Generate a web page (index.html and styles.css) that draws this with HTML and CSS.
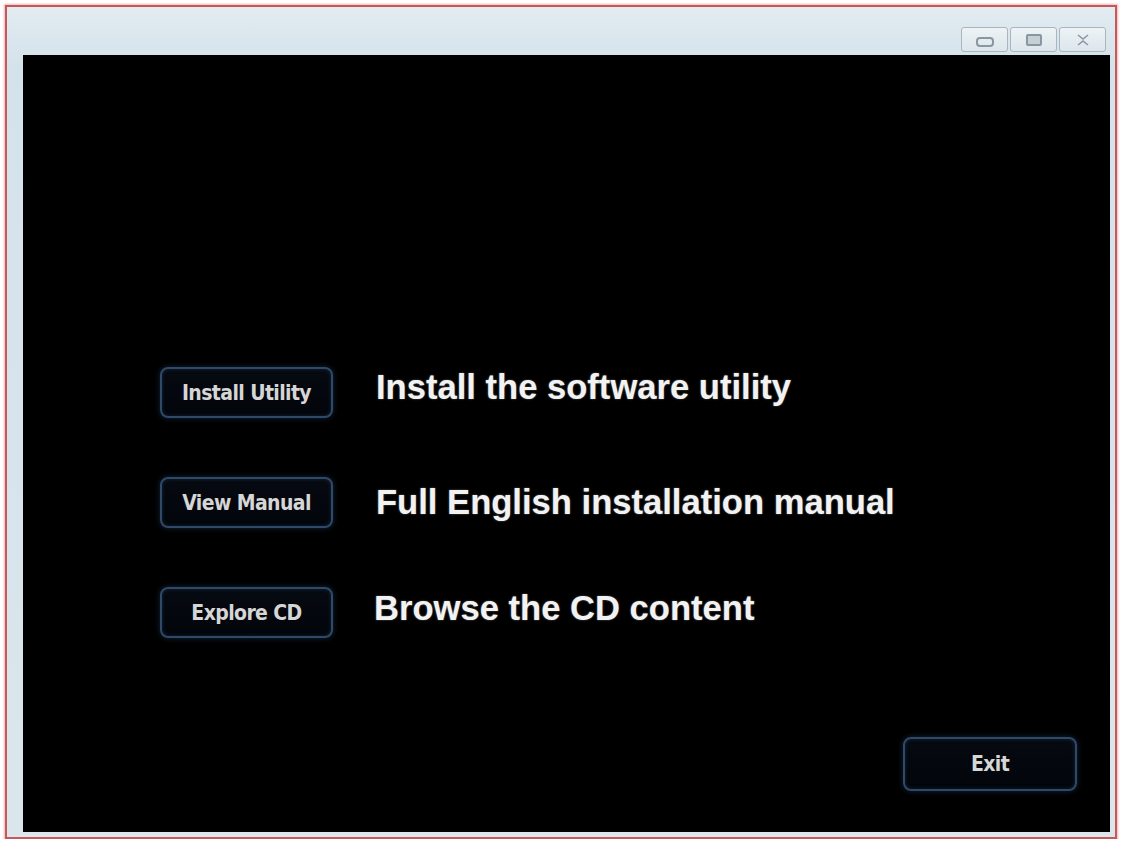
FILE: index.html
```html
<!DOCTYPE html>
<html lang="en">
<head>
    <meta charset="UTF-8">
    <meta name="viewport" content="width=device-width, initial-scale=1.0">
    <title>Setup</title>
    <link rel="stylesheet" href="styles.css">
</head>
<body>
    <div class="window">
        <div class="titlebar">
            <div class="controls">
                <span class="ctl"><span class="ico-min"></span></span>
                <span class="ctl"><span class="ico-max"></span></span>
                <span class="ctl">
                    <svg width="14" height="12" viewBox="0 0 14 12">
                        <path d="M2 1 L7 5 L12 1 M2 11 L7 7 L12 11" fill="none" stroke="#8a98a2" stroke-width="1.6"/>
                    </svg>
                </span>
            </div>
        </div>

        <div class="content">
            <div class="menu">
                <div class="row">
                    <button class="btn">Install Utility</button>
                    <span class="label label-up">Install the software utility</span>
                </div>
                <div class="row">
                    <button class="btn">View Manual</button>
                    <span class="label">Full English installation manual</span>
                </div>
                <div class="row">
                    <button class="btn">Explore CD</button>
                    <span class="label label-left">Browse the CD content</span>
                </div>
            </div>

            <button class="btn btn-exit">Exit</button>
        </div>
    </div>
</body>
</html>
```

FILE: styles.css
```css
html, body {
    margin: 0;
    padding: 0;
    background-color: #ffffff;
}
body {
    font-family: "Liberation Sans", Arial, sans-serif;
}
.window {
    margin: 5px 6px 0 5px;
    height: 830px;
    border: 2px solid #c4585b;
    box-shadow: 0 0 2px 1px #eeb4b4;
    background: linear-gradient(#e2ecf1, #d4e2ea 60px, #dbe6ec);
    display: flex;
    flex-direction: column;
}
.titlebar {
    height: 48px;
    display: flex;
    justify-content: flex-end;
    align-items: flex-end;
    padding-right: 9px;
    flex-shrink: 0;
}
.controls {
    display: flex;
    gap: 2px;
    margin-bottom: 3px;
}
.ctl {
    width: 45px;
    height: 23px;
    border: 1px solid #aab6be;
    border-radius: 3px;
    background: linear-gradient(#edf3f6, #dce6ec);
    display: flex;
    align-items: center;
    justify-content: center;
}
.ico-min {
    width: 14px;
    height: 6px;
    border: 2px solid #8796a0;
    border-radius: 4px;
    margin-top: 4px;
}
.ico-max {
    width: 12px;
    height: 8px;
    border: 2px solid #8796a0;
    border-radius: 2px;
    background: #c5d0d6;
}
.content {
    flex: 1;
    margin: 0 5px 5px 16px;
    background-color: #000000;
    display: flex;
    flex-direction: column;
}
.menu {
    margin-top: 312px;
    padding-left: 137px;
    display: flex;
    flex-direction: column;
    gap: 59px;
}
.row {
    display: flex;
    align-items: center;
    gap: 43px;
}
.btn {
    width: 173px;
    height: 51px;
    border: 2px solid #2f4a68;
    border-radius: 8px;
    background: linear-gradient(#060a11, #02050a);
    box-shadow: 0 0 5px 1px rgba(40, 80, 130, 0.35), inset 0 0 4px rgba(60, 100, 150, 0.3);
    color: #d6d6d6;
    font-family: "DejaVu Sans Condensed", "DejaVu Sans", sans-serif;
    font-stretch: condensed;
    font-weight: bold;
    font-size: 21px;
    letter-spacing: -0.6px;
    padding: 0;
    cursor: pointer;
}
.label {
    color: #f2f2f2;
    font-weight: bold;
    font-size: 34.6px;
    text-shadow: 0 0 2px rgba(255, 255, 255, 0.4);
}
.label-up {
    margin-top: -10px;
}
.label-left {
    margin-left: -2px;
    margin-top: -8px;
}
.btn-exit {
    margin-top: auto;
    align-self: flex-end;
    margin-right: 33px;
    margin-bottom: 41px;
    width: 174px;
    height: 54px;
}
```
